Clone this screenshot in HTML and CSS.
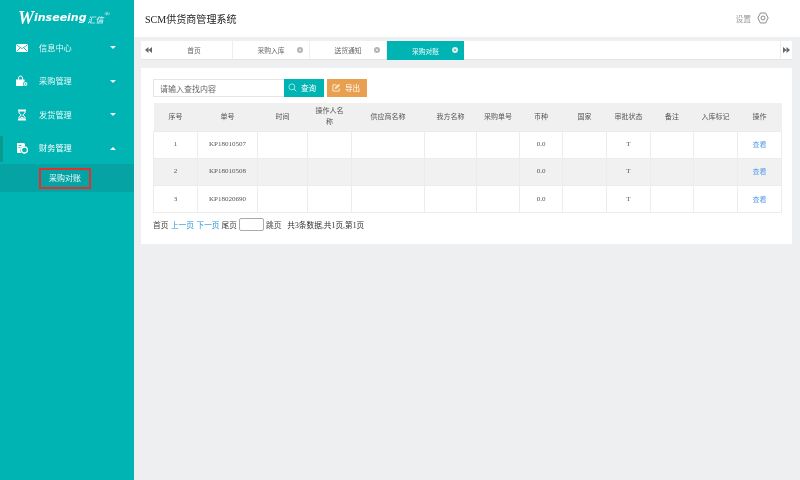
FILE: index.html
```html
<!DOCTYPE html>
<html lang="zh-CN">
<head>
<meta charset="utf-8">
<title>SCM供货商管理系统</title>
<link rel="stylesheet" href="styles.css">
</head>
<body>
<aside class="sidebar">
  <div class="logo"><span class="logo-w">W</span><span class="logo-text">inseeing</span><span class="logo-cn">汇信</span><sup class="logo-r">®</sup></div>
  <nav class="menu">
    <div class="menu-item">
      <svg class="menu-icon" viewBox="0 0 12 12"><rect x="0" y="2" width="12" height="8" rx="1.500" fill="#fff"/><path d="M1 3.200 6 6.600 11 3.200M1 9 4.400 5.600M11 9 7.600 5.600" fill="none" stroke="#00b4b4" stroke-width=".8"/></svg>
      <span class="menu-label">信息中心</span><span class="caret down"></span>
    </div>
    <div class="menu-item">
      <svg class="menu-icon" viewBox="0 0 12 12"><rect x="0" y="5" width="8.500" height="6" fill="#fff"/><path d="M2.500 5V3a2 2 0 0 1 4 0V5" fill="none" stroke="#fff" stroke-width="1"/><path d="M0 5h8.500" stroke="#fff"/><circle cx="9.500" cy="9" r="2.300" fill="#fff" stroke="#00b4b4" stroke-width=".8"/><circle cx="9.500" cy="9" r=".8" fill="#00b4b4"/></svg>
      <span class="menu-label">采购管理</span><span class="caret down"></span>
    </div>
    <div class="menu-item">
      <svg class="menu-icon" viewBox="0 0 12 12"><path d="M2 .5h8v1.400H2zM2 10.100h8v1.400H2z" fill="#fff"/><path d="M3 2h6v2L6.700 6 9 8v2H3V8l2.300-2L3 4z" fill="none" stroke="#fff"/><path d="M3.500 9.600 6 7.400l2.500 2.200z" fill="#fff"/></svg>
      <span class="menu-label">发货管理</span><span class="caret down"></span>
    </div>
    <div class="menu-item active">
      <svg class="menu-icon" viewBox="0 0 12 12"><path d="M1 1h7l1 1v2.400A4 4 0 0 0 5.400 11H1z" fill="#fff"/><circle cx="8.500" cy="8" r="3" fill="none" stroke="#fff" stroke-width="1.300"/><path d="M2.500 3.500h3M2.500 5.500h2" stroke="#00b4b4" stroke-width=".8"/></svg>
      <span class="menu-label">财务管理</span><span class="caret up"></span>
    </div>
    <div class="submenu"><span class="submenu-item">采购对账</span></div>
  </nav>
</aside>
<main class="main">
  <header class="topbar">
    <h1 class="title">SCM供货商管理系统</h1>
    <div class="settings">
      <span>设置</span>
      <svg class="gear" viewBox="0 0 14 14"><path d="M4 1.200h6L13 7l-3 5.800H4L1 7z" fill="none" stroke="#777" stroke-width="1" stroke-linejoin="round"/><circle cx="7" cy="7" r="2.300" fill="none" stroke="#777" stroke-width="1"/></svg>
    </div>
  </header>
  <div class="tabs">
    <button class="tab-nav"><svg viewBox="0 0 7 6"><path d="M3.500 0v6L0 3zM7 0v6L3.500 3z" fill="#666"/></svg></button>
    <div class="tab">首页</div>
    <div class="tab">采购入库<i class="close"></i></div>
    <div class="tab">送货通知<i class="close"></i></div>
    <div class="tab current">采购对账<i class="close"></i></div>
    <div class="tabs-fill"></div>
    <button class="tab-nav end"><svg viewBox="0 0 7 6"><path d="M0 0v6L3.500 3zM3.500 0v6L7 3z" fill="#666"/></svg></button>
  </div>
  <section class="panel">
    <div class="toolbar">
      <input class="search" type="text" placeholder="请输入查找内容">
      <button class="btn teal"><svg viewBox="0 0 10 10"><circle cx="4.300" cy="4.300" r="3.300" fill="none" stroke="#bfeeee" stroke-width=".9"/><path d="M6.800 6.800 9.300 9.300" stroke="#bfeeee"/></svg>查询</button>
      <button class="btn orange"><svg viewBox="0 0 10 10"><path d="M8 6v3H1V2h4" fill="none" stroke="#fbe6cc" stroke-width="1.100"/><path d="M3 7 3.600 4.500 7.500 1 9 2.500 5.300 6z" fill="#fbe6cc"/></svg>导出</button>
    </div>
    <table class="grid">
      <colgroup>
        <col class="c44"><col class="c60"><col class="c50"><col class="c44"><col class="c73"><col class="c52"><col class="c43"><col class="c43"><col class="c44"><col class="c44"><col class="c43"><col class="c44"><col class="c44">
      </colgroup>
      <thead>
        <tr><th>序号</th><th>单号</th><th>时间</th><th>操作人名称</th><th>供应商名称</th><th>我方名称</th><th>采购单号</th><th>币种</th><th>国家</th><th>审批状态</th><th>备注</th><th>入库标记</th><th>操作</th></tr>
      </thead>
      <tbody>
        <tr><td>1</td><td>KP18010507</td><td></td><td></td><td></td><td></td><td></td><td>0.0</td><td></td><td>T</td><td></td><td></td><td><a class="link">查看</a></td></tr>
        <tr><td>2</td><td>KP18010508</td><td></td><td></td><td></td><td></td><td></td><td>0.0</td><td></td><td>T</td><td></td><td></td><td><a class="link">查看</a></td></tr>
        <tr><td>3</td><td>KP18020690</td><td></td><td></td><td></td><td></td><td></td><td>0.0</td><td></td><td>T</td><td></td><td></td><td><a class="link">查看</a></td></tr>
      </tbody>
    </table>
    <div class="pager">
      <span>首页</span><a class="page-link">上一页</a><a class="page-link">下一页</a><span>尾页</span><input class="page-input" type="text"><span>跳页</span><span class="page-info">共3条数据,共1页,第1页</span>
    </div>
  </section>
</main>
</body>
</html>
```

FILE: styles.css
```css
* { box-sizing: border-box; }
html, body { height: 100%; }
html { background: #eeeff0; }
body {
  margin: 0;
  display: flex;
  height: 480px;
  overflow: hidden;
  background: #eeeff0;
  font-family: "Liberation Serif", "Noto Sans CJK SC", serif;
  color: #444;
  filter: blur(.25px);
}
.sidebar { width: 134px; flex: none; background: #00b4b4; color: #fff; }
.logo {
  height: 30px;
  padding: 9px 0 0 18px;
  display: flex;
  align-items: flex-start;
  line-height: 18px;
  white-space: nowrap;
}
.logo-w { font-family: "Liberation Serif", serif; font-style: italic; font-weight: bold; font-size: 18px; }
.logo-text { font-family: "DejaVu Sans", sans-serif; font-style: oblique; font-weight: bold; font-size: 11px; }
.logo-cn { font-family: "Noto Sans CJK SC", sans-serif; font-size: 8px; font-style: italic; margin: 2px 0 0 1px; }
.logo-r { font-size: 7px; line-height: 8px; margin: 1px 0 0 1px; }
.menu-item {
  position: relative;
  height: 33.500px;
  display: flex;
  align-items: center;
  padding: 0 18px 0 16px;
}
.menu-item.active::before {
  content: "";
  position: absolute;
  left: 0;
  top: 5px;
  width: 3px;
  height: 26px;
  background: #08998f;
}
.menu-icon { width: 12px; height: 12px; flex: none; margin: 2px 11px 0 0; }
.menu-label { flex: 1; font-family: "Noto Sans CJK SC", sans-serif; font-size: 8.200px; color: #e6f9f9; }
.active .menu-label { color: #fff; }
.caret { width: 0; height: 0; margin-top: 2px; border-left: 3.500px solid transparent; border-right: 3.500px solid transparent; }
.caret.down { border-top: 3.500px solid #f0fbfb; }
.caret.up { border-bottom: 3.500px solid #fff; }
.submenu { height: 28px; background: #05a3a3; padding: 4px 0 0 39px; }
.submenu-item {
  display: block;
  width: 52px;
  height: 21px;
  border: 2px solid #e3302f;
  text-align: center;
  line-height: 15px;
  font-family: "Noto Sans CJK SC", sans-serif;
  font-size: 8px;
  color: #f0fbfb;
}
.main { flex: 1; min-width: 0; display: flex; flex-direction: column; }
.topbar {
  height: 37px;
  background: #fff;
  display: flex;
  align-items: center;
  justify-content: space-between;
  padding: 0 31px 1px 11px;
}
.title { margin: 0; font-size: 10.050px; font-weight: normal; color: #222; }
.settings { display: flex; align-items: center; gap: 6px; font-family: "Noto Sans CJK SC", sans-serif; font-size: 7.800px; color: #999; }
.gear { width: 12px; height: 12px; }
.tabs {
  height: 19px;
  margin: 4px 8px 0 7px;
  background: #fff;
  border-bottom: 1px solid #e2e4e5;
  display: flex;
  font-family: "Noto Sans CJK SC", sans-serif;
  font-size: 6.800px;
  color: #666;
}
.tab-nav { width: 15px; padding: 0 0 0 4px; border: 0; background: #fff; display: flex; align-items: center; }
.tab-nav svg { width: 7px; height: 6px; }
.tab-nav.end { width: 12px; border-left: 1px solid #eee; padding-left: 2px; }
.tab {
  width: 77px;
  height: 18px;
  position: relative;
  display: flex;
  align-items: center;
  justify-content: center;
  border-right: 1px solid #eee;
}
.tab.current { background: #00b4b4; color: #eefafa; border-right: 0; height: 19px; }
.tabs-fill { flex: 1; }
.close {
  position: absolute;
  right: 6px;
  top: 6px;
  width: 6px;
  height: 6px;
  border-radius: 50%;
  background: #f2f2f2;
  border: 2px solid #b4b4b4;
}
.current .close { border-color: #d5f0f0; background: #8a9a9a; }
.panel { margin: 8px 8px 0 7px; height: 176px; background: #fff; padding: 11px 11px 0 12px; }
.toolbar { height: 18px; display: flex; }
.search {
  width: 131px;
  height: 18px;
  padding: 0 6px;
  border: 1px solid #e5e5e5;
  border-right: 0;
  outline: 0;
  font-family: "Noto Sans CJK SC", sans-serif;
  font-size: 8px;
}
.search::placeholder { color: #666; }
.btn {
  width: 40px;
  height: 18px;
  padding: 0 2px 2px 0;
  border: 0;
  display: flex;
  align-items: center;
  justify-content: center;
  gap: 4px;
  font-family: "Noto Sans CJK SC", sans-serif;
  font-size: 7.600px;
  color: #fff;
}
.btn svg { width: 9px; height: 9px; }
.teal { background: #00b4b4; padding-right: 4px; }
.orange { background: #e8a050; margin-left: 3px; }
.grid {
  margin-top: 6px;
  width: 628px;
  table-layout: fixed;
  border-collapse: collapse;
  font-size: 7px;
  text-align: center;
}
.c43 { width: 43px; } .c44 { width: 44px; } .c50 { width: 50px; } .c52 { width: 52px; } .c60 { width: 60px; } .c73 { width: 73px; }
.grid th {
  height: 28px;
  padding: 0 6px 1px;
  background: #f0f0f0;
  font-weight: normal;
  font-family: "Noto Sans CJK SC", sans-serif;
  font-size: 7px;
  line-height: 11px;
  color: #555;
}
.grid td { height: 27.300px; padding: 0 0 1px; border: 1px solid #ececec; color: #555; }
.grid tbody tr:nth-child(2) td { background: #f1f1f1; }
.link { font-family: "Noto Sans CJK SC", sans-serif; color: #5a9fe8; }
.pager {
  margin-top: 5px;
  height: 13px;
  display: flex;
  align-items: center;
  font-family: "Liberation Serif", "Noto Sans CJK SC", serif;
  font-size: 7.700px;
  color: #444;
}
.page-link { color: #2a94d8; margin-left: 2.500px; }
.page-link + span { margin-left: 2px; }
.page-input { width: 25px; height: 13px; margin: 0 2px; padding: 0; border: 1px solid #aaa; border-radius: 2px; }
.page-info { margin-left: 6px; color: #333; }
```
